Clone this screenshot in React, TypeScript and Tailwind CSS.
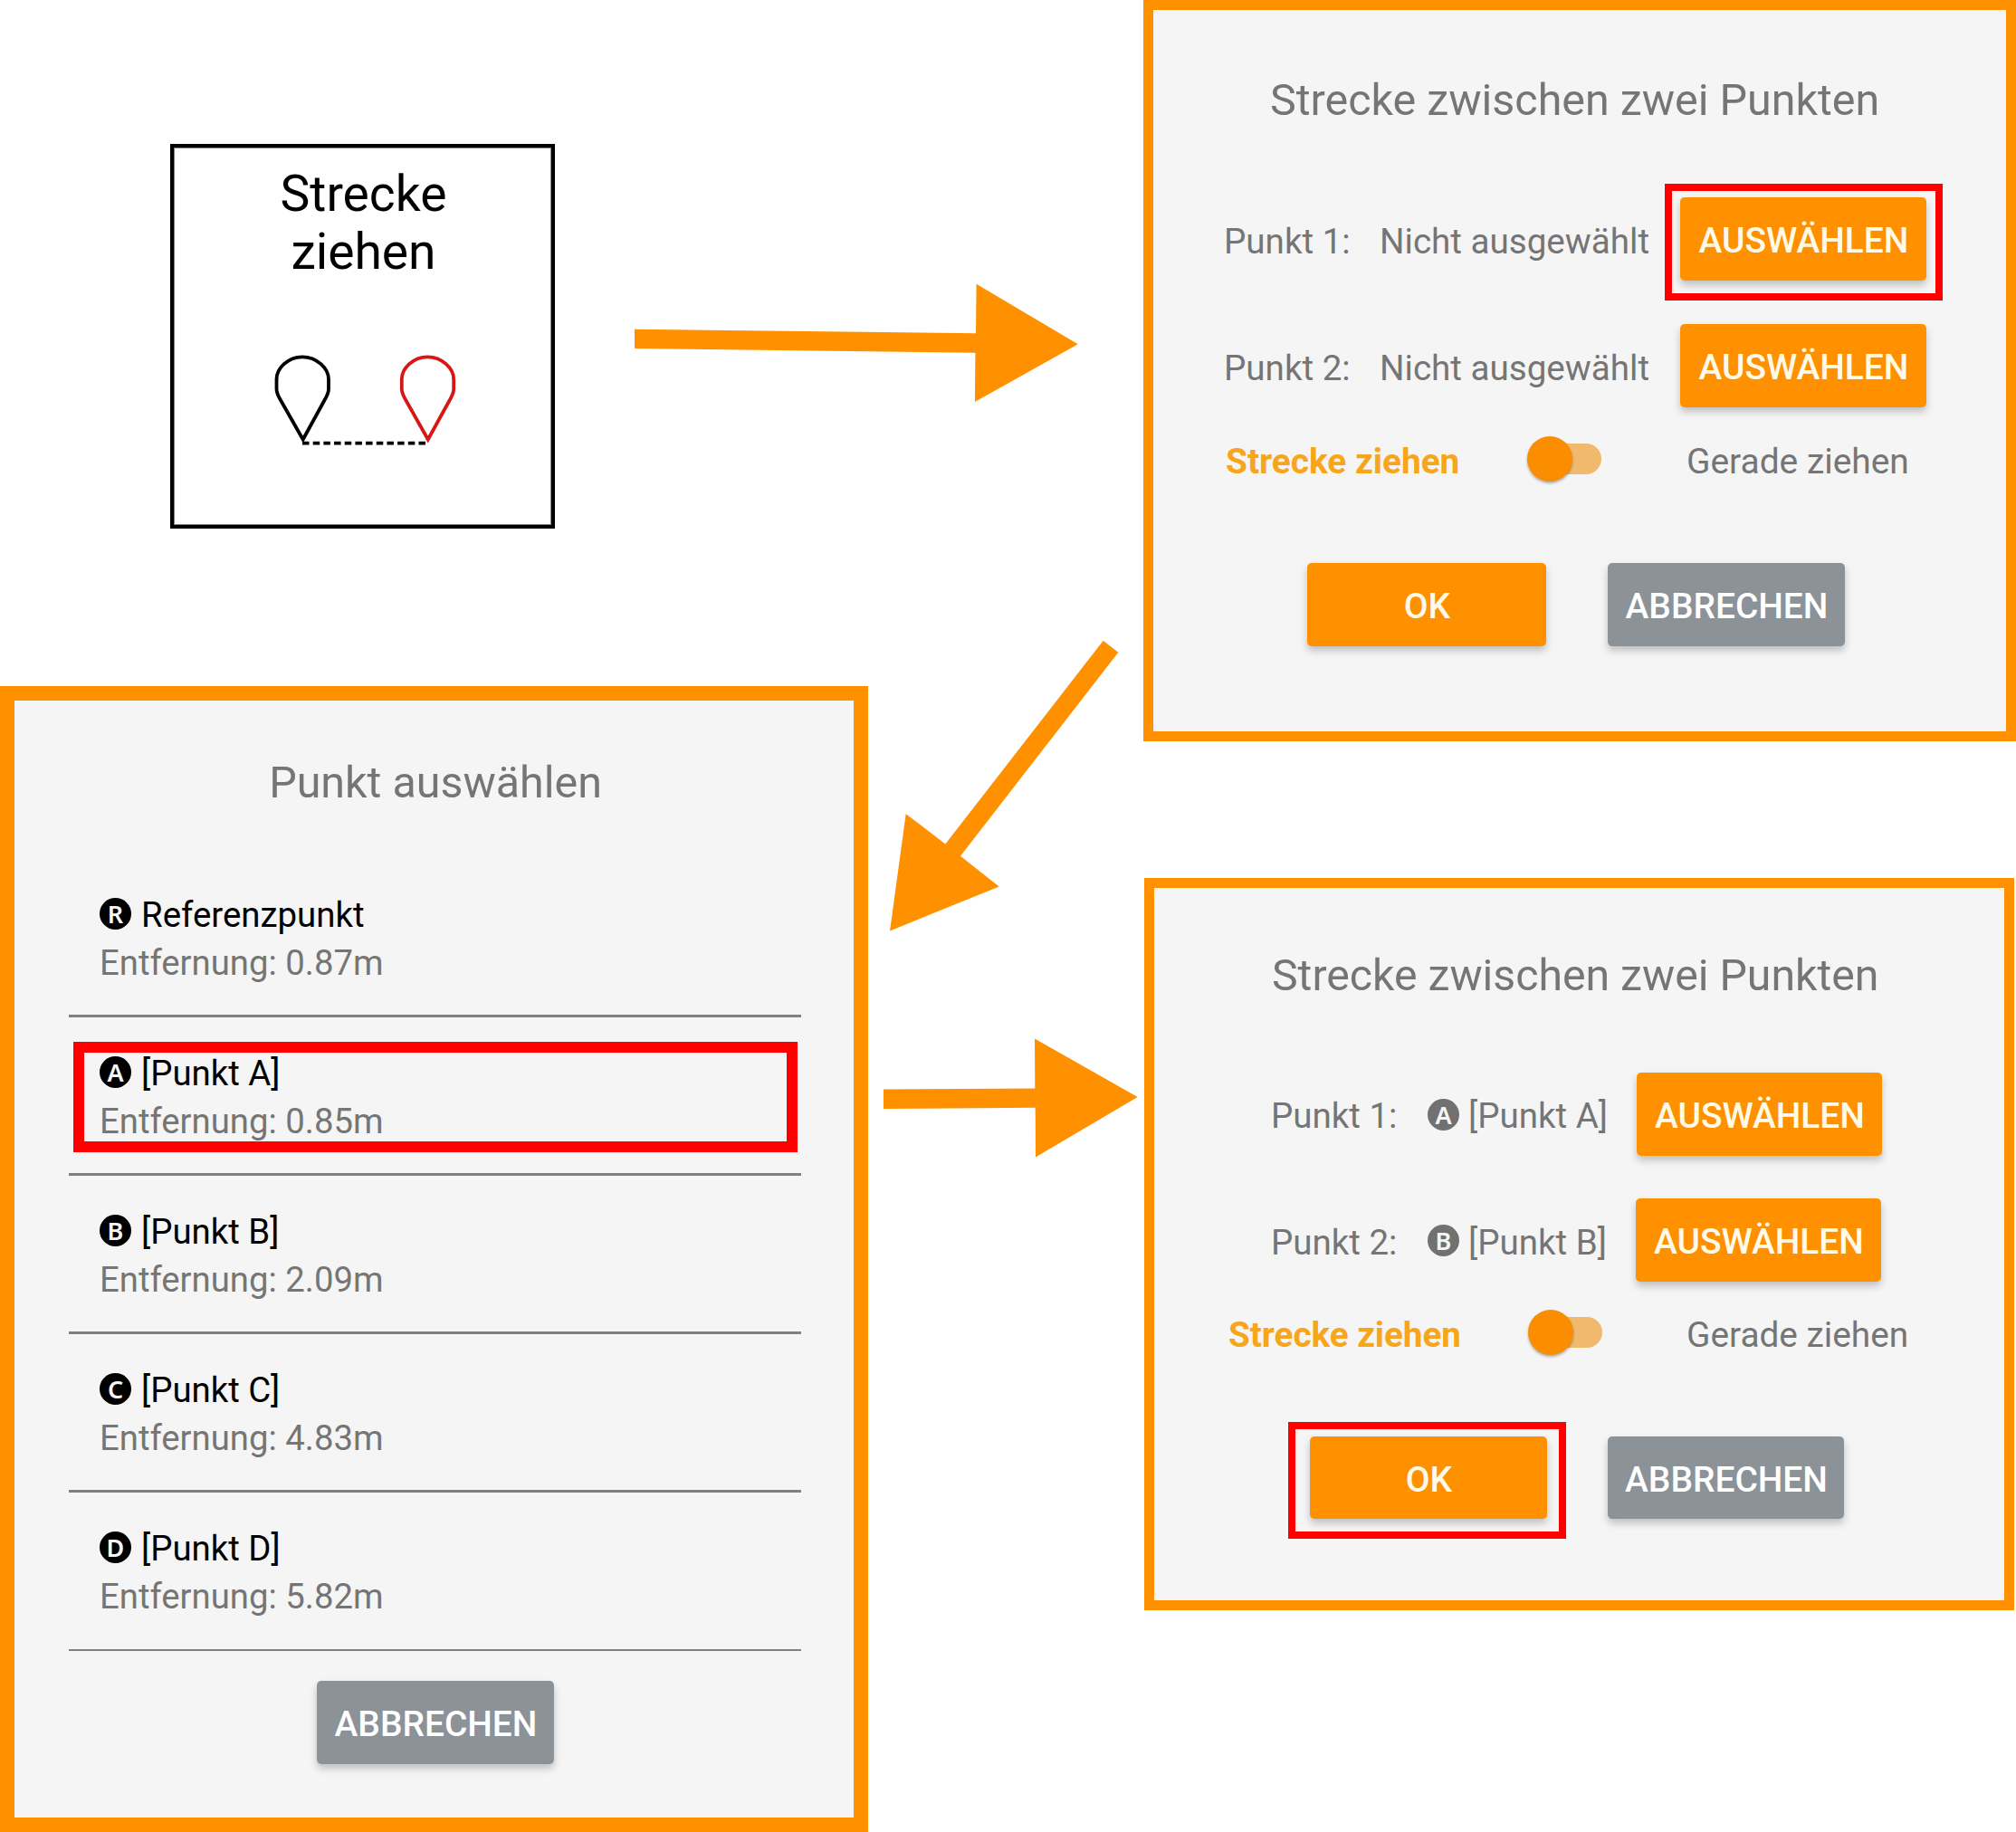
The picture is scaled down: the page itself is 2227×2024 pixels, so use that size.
import type { ReactNode } from "react";

function Button({ label, className, children }: { label: string; className: string; children?: ReactNode }) {
  return (
    <div
      className={
        "relative flex shrink-0 items-center justify-center rounded-[5px] pt-[5px] pl-px text-[38.9px] font-medium leading-none whitespace-nowrap shadow-[0_5px_8px_rgba(0,0,0,0.22)] " +
        className
      }
    >
      {label}
      {children}
    </div>
  );
}

function Badge({ letter, className }: { letter: string; className: string }) {
  return (
    <span
      className={
        "flex size-[35px] shrink-0 items-center justify-center rounded-full font-['Noto_Sans'] text-[27px] font-semibold leading-none text-[#f5f5f5] " +
        className
      }
    >
      {letter}
    </span>
  );
}

function Switch() {
  return (
    <div className="flex h-[50px] w-[82px] shrink-0 items-center">
      <div className="relative z-10 size-[50px] shrink-0 rounded-full bg-[#fb8d00] shadow-[0_2px_3px_rgba(0,0,0,0.3)]" />
      <div className="-ml-[20px] h-[34px] w-[52px] rounded-r-full bg-[#f1b96e]" />
    </div>
  );
}

function StepCard() {
  return (
    <div className="mt-[159px] ml-[188px] h-[425px] w-[425px] border-4 border-black bg-white pt-[19px] shadow-[inset_0_0_0_1px_#808080]">
      <div className="pl-[2px] text-center text-[55.2px] leading-[64.4px] text-black">
        Strecke
        <br />
        ziehen
      </div>
      <svg className="mt-[77px] ml-[108px]" width="210" height="108" viewBox="300 388 210 108" fill="none">
        <path
          d="M334 394.3C350 394.3 363 407 363 419V430C363 434 361 438 358 443L334.7 485.5L310.5 443C307.5 438 305.5 434 305.5 430V419C305.5 407 318 394.3 334 394.3Z"
          stroke="#000"
          strokeWidth="3.8"
        />
        <path
          d="M472.3 394.3C488.3 394.3 501.2 407 501.2 419V430C501.2 434 499.2 438 496.2 443L472.8 485.5L448.8 443C445.8 438 443.8 434 443.8 430V419C443.8 407 456.3 394.3 472.3 394.3Z"
          stroke="#d91616"
          strokeWidth="3.8"
        />
        <path d="M334 489.7H470" stroke="#000" strokeWidth="3.8" strokeDasharray="7.5 4.18" />
      </svg>
    </div>
  );
}

const points = [
  { letter: "R", name: "Referenzpunkt", distance: "0.87m" },
  { letter: "A", name: "[Punkt A]", distance: "0.85m", marked: true },
  { letter: "B", name: "[Punkt B]", distance: "2.09m" },
  { letter: "C", name: "[Punkt C]", distance: "4.83m" },
  { letter: "D", name: "[Punkt D]", distance: "5.82m" },
];

function PointListDialog() {
  return (
    <div className="mt-[174px] flex h-[1266px] w-[959px] flex-col border-16 border-[#ff9100] bg-[#f5f5f5] pt-[63px]">
      <div className="pl-[3px] text-center text-[48.4px] leading-[56px] text-[#757575]">Punkt auswählen</div>
      <div className="mt-[56px] ml-[60px] flex w-[809px] flex-col">
        {points.map((p) => (
          <div
            key={p.letter}
            className="relative h-[175px] border-b-3 border-[#808080] pt-[35px] pl-[33px] text-[38.4px] leading-[53px] last:border-b-2"
          >
            <div className="flex items-center text-black">
              <Badge letter={p.letter} className="mb-[2px] ml-px bg-black" />
              <span className="ml-[11px]">{p.name}</span>
            </div>
            <div className="pl-px text-[38.3px] text-[#757575]">Entfernung: {p.distance}</div>
            {p.marked && <div className="absolute top-[27px] left-[5px] h-[122px] w-[800px] border-12 border-[#ff0000]" />}
          </div>
        ))}
      </div>
      <Button label="ABBRECHEN" className="mt-[33px] ml-[334px] h-[92px] w-[262px] bg-[#8b9298] text-white" />
    </div>
  );
}

function EmptySelectionDialog() {
  return (
    <div className="flex h-[819px] w-[964px] flex-col border-11 border-[#ff9100] bg-[#f5f5f5] pt-[72px] text-[38.6px] leading-[48px] text-[#757575]">
      <div className="pl-[129px] text-[48.4px] leading-[56px] whitespace-nowrap">Strecke zwischen zwei Punkten</div>
      <div className="mt-[79px] flex h-[92px] items-center pl-[78px]">
        <div className="w-[172px] pt-[5px]">Punkt 1:</div>
        <div className="w-[332px] pt-[5px]">Nicht ausgewählt</div>
        <Button label="AUSWÄHLEN" className="h-[92px] w-[272px] bg-[#ff9100] text-[#fffbe8]">
          <div className="absolute -top-[15px] -left-[17px] h-[129px] w-[307px] border-8 border-[#ff0000]" />
        </Button>
      </div>
      <div className="mt-[48px] flex h-[92px] items-center pl-[78px]">
        <div className="w-[172px] pt-[5px]">Punkt 2:</div>
        <div className="w-[332px] pt-[5px]">Nicht ausgewählt</div>
        <Button label="AUSWÄHLEN" className="h-[92px] w-[272px] bg-[#ff9100] text-[#fffbe8]" />
      </div>
      <div className="mt-[32px] flex h-[50px] items-center pl-[80px]">
        <div className="w-[333px] pt-[5px] text-[38.8px] font-bold text-[#f7a51a]">Strecke ziehen</div>
        <Switch />
        <div className="ml-[94px] pt-[5px] text-[38.9px]">Gerade ziehen</div>
      </div>
      <div className="mt-[90px] flex gap-[68px] pl-[170px]">
        <Button label="OK" className="h-[92px] w-[264px] bg-[#ff9100] text-[#fffbe8]" />
        <Button label="ABBRECHEN" className="h-[92px] w-[262px] bg-[#8b9298] text-white" />
      </div>
    </div>
  );
}

function FilledSelectionDialog() {
  return (
    <div className="mt-[151px] ml-px flex h-[809px] w-[961px] flex-col border-11 border-[#ff9100] bg-[#f5f5f5] pt-[69px] text-[38.5px] leading-[48px] text-[#757575]">
      <div className="pl-[130px] text-[48.2px] leading-[56px] whitespace-nowrap">Strecke zwischen zwei Punkten</div>
      <div className="mt-[79px] flex h-[92px] items-center pl-[129px]">
        <div className="w-[173px] pt-[4px]">Punkt 1:</div>
        <div className="flex w-[231px] items-center">
          <Badge letter="A" className="bg-[#717171]" />
          <span className="ml-[10px] pt-[4px]">[Punkt A]</span>
        </div>
        <Button label="AUSWÄHLEN" className="h-[92px] w-[271px] bg-[#ff9100] text-[#fffbe8]" />
      </div>
      <div className="mt-[47px] flex h-[92px] items-center pl-[129px]">
        <div className="w-[173px] pt-[5px]">Punkt 2:</div>
        <div className="flex w-[230px] items-center">
          <Badge letter="B" className="bg-[#717171]" />
          <span className="ml-[10px] pt-[5px]">[Punkt B]</span>
        </div>
        <Button label="AUSWÄHLEN" className="h-[92px] w-[271px] bg-[#ff9100] text-[#fffbe8]" />
      </div>
      <div className="mt-[31px] flex h-[50px] items-center pl-[82px]">
        <div className="w-[331px] pt-[5px] text-[38.6px] font-bold text-[#f7a51a]">Strecke ziehen</div>
        <Switch />
        <div className="ml-[93px] pt-[5px] text-[38.8px]">Gerade ziehen</div>
      </div>
      <div className="mt-[90px] flex gap-[67px] pl-[172px]">
        <Button label="OK" className="h-[91px] w-[262px] bg-[#ff9100] text-[#fffbe8]">
          <div className="absolute -top-[16px] -left-[24px] h-[129px] w-[307px] border-8 border-[#ff0000]" />
        </Button>
        <Button label="ABBRECHEN" className="h-[91px] w-[261px] bg-[#8b9298] text-white" />
      </div>
    </div>
  );
}

function Arrows() {
  return (
    <svg className="absolute top-0 left-0" width="2227" height="2024" viewBox="0 0 2227 2024" fill="#ff9100">
      <path d="M701 363.7L1078 368.3L1078.6 313.7L1190.8 380.3L1076.9 444L1077.4 389.7L701 385Z" />
      <path d="M1218.7 707.8L1235.3 720.8L1061 945.8L1103.7 979.4L983 1028.5L1000.7 899.2L1044.3 932.4Z" />
      <path d="M976 1203.6L1143.3 1202.5L1143 1147.5L1256.7 1212L1144 1278.4L1143.7 1223.8L976 1225Z" />
    </svg>
  );
}

export default function App() {
  return (
    <div className="relative flex h-[2024px] w-[2227px] gap-[304px] overflow-hidden bg-white font-['Roboto',sans-serif]">
      <div className="w-[959px] shrink-0">
        <StepCard />
        <PointListDialog />
      </div>
      <div className="w-[964px] shrink-0">
        <EmptySelectionDialog />
        <FilledSelectionDialog />
      </div>
      <Arrows />
    </div>
  );
}
